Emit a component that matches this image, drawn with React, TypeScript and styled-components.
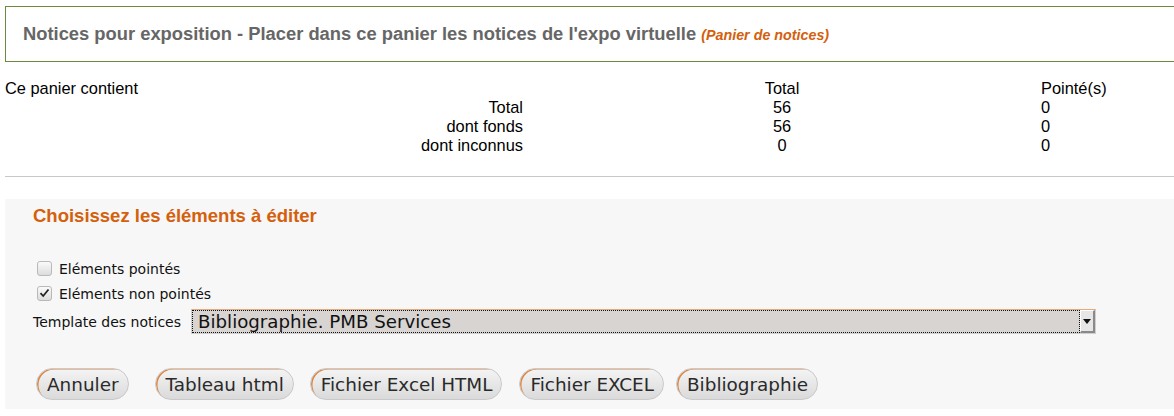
import React from "react";
import styled, { createGlobalStyle } from "styled-components";

const Global = createGlobalStyle`
  html, body { margin: 0; padding: 0; background: #fff; }
  body { font-family: "Liberation Sans", Arial, sans-serif; color: #000; overflow: hidden; }
`;

const Page = styled.div`
  width: 1174px;
  height: 416px;
  padding-top: 6px;
  box-sizing: border-box;
`;

const Header = styled.div`
  margin-left: 5px;
  height: 56px;
  box-sizing: border-box;
  border-top: 1px solid #6b8a3c;
  border-bottom: 1px solid #6b8a3c;
  border-left: 1px solid #6b8a3c;
  display: flex;
  align-items: center;
  padding-left: 17px;
`;

const HeaderTitle = styled.h1`
  margin: 0;
  font-size: 18.35px;
  font-weight: bold;
  color: #666;
  white-space: nowrap;
`;

const HeaderSub = styled.span`
  font-size: 14.3px;
  font-style: italic;
  font-weight: bold;
  color: #d4600c;
`;

const Stats = styled.div`
  margin: 17px 0 0 5px;
  display: grid;
  grid-template-columns: 518px 518px 1fr;
  grid-auto-rows: 19px;
  font-size: 16.4px;
  line-height: 19px;
`;

type CellProps = { $align: "left" | "center" | "right" };
const Cell = styled.div<CellProps>`
  text-align: ${(p) => p.$align};
  white-space: nowrap;
`;

const Rule = styled.hr`
  margin: 21px 0 0 5px;
  border: none;
  border-top: 1px solid #c8c8c8;
  height: 0;
`;

const Panel = styled.div`
  margin: 22px 0 0 5px;
  height: 210px;
  box-sizing: border-box;
  background: #f7f7f7;
  padding: 6px 0 0 28px;
  font-family: "DejaVu Sans", sans-serif;
  font-size: 14px;
  color: #111;
`;

const PanelTitle = styled.h3`
  margin: 0;
  font-family: "Liberation Sans", Arial, sans-serif;
  font-size: 18.5px;
  line-height: 22px;
  font-weight: bold;
  color: #d4600c;
`;

const Options = styled.div`
  margin-top: 29px;
  display: flex;
  flex-direction: column;
`;

const CheckRow = styled.label`
  display: flex;
  align-items: center;
  height: 25px;
  gap: 7px;
  padding-left: 4px;
`;

const Box = styled.span`
  width: 13px;
  height: 13px;
  border: 1px solid #b9b9b9;
  border-radius: 3px;
  background: linear-gradient(#fafafa, #dcdcdc);
  display: flex;
  align-items: center;
  justify-content: center;
  margin-top: -1px;
`;

const TemplateRow = styled.div`
  margin-top: 3px;
  display: flex;
  align-items: center;
  gap: 10px;
  height: 25px;
`;

const Select = styled.div`
  width: 905px;
  height: 25px;
  box-sizing: border-box;
  display: flex;
  border: 1px solid #cfcfcf;
  border-top-color: #e9a877;
  background: #fff;
`;

const SelectValue = styled.div`
  flex: 1;
  background: #d7d4d1;
  border: 1px dotted #111;
  display: flex;
  align-items: center;
  padding-left: 5px;
  font-size: 18.2px;
  color: #111;
  white-space: nowrap;
`;

const SelectArrow = styled.div`
  width: 15px;
  box-sizing: border-box;
  background: #e6e6e6;
  border-right: 2px solid #8a8a8a;
  border-bottom: 2px solid #8a8a8a;
  border-top: 1px solid #fff;
  border-left: 1px solid #fff;
  display: flex;
  align-items: center;
  justify-content: center;
`;

const Buttons = styled.div`
  margin-top: 34px;
  display: flex;
  padding-left: 3px;
`;

const Button = styled.button<{ $space: number }>`
  height: 32px;
  box-sizing: border-box;
  padding: 0 9px 0 10px;
  margin-left: ${(p) => p.$space}px;
  border: 1px solid #c9c9c9;
  border-radius: 16px;
  background: linear-gradient(#f4f4f4, #dadada);
  box-shadow: inset 2px 1px 0 -0.5px #dd8642;
  font-family: "DejaVu Sans", sans-serif;
  font-size: 18.4px;
  color: #2a2a2a;
  cursor: pointer;
`;

const rows: [string, string, string][] = [
  ["Total", "56", "0"],
  ["dont fonds", "56", "0"],
  ["dont inconnus", "0", "0"],
];

const buttons: [string, number][] = [
  ["Annuler", 0],
  ["Tableau html", 26],
  ["Fichier Excel HTML", 16],
  ["Fichier EXCEL", 17],
  ["Bibliographie", 12],
];

export default function App() {
  return (
    <Page>
      <Global />
      <Header>
        <HeaderTitle>
          Notices pour exposition - Placer dans ce panier les notices de l'expo virtuelle{" "}
          <HeaderSub>(Panier de notices)</HeaderSub>
        </HeaderTitle>
      </Header>
      <Stats>
        <Cell $align="left">Ce panier contient</Cell>
        <Cell $align="center">Total</Cell>
        <Cell $align="left">Pointé(s)</Cell>
        {rows.map(([l, t, p]) => (
          <React.Fragment key={l}>
            <Cell $align="right">{l}</Cell>
            <Cell $align="center">{t}</Cell>
            <Cell $align="left">{p}</Cell>
          </React.Fragment>
        ))}
      </Stats>
      <Rule />
      <Panel>
        <PanelTitle>Choisissez les éléments à éditer</PanelTitle>
        <Options>
          <CheckRow>
            <Box />
            Eléments pointés
          </CheckRow>
          <CheckRow>
            <Box>
              <svg width="11" height="10" viewBox="0 0 11 10">
                <path d="M1.5 5.2 L4.2 8 L9.5 1.5" fill="none" stroke="#222" strokeWidth="1.8" />
              </svg>
            </Box>
            Eléments non pointés
          </CheckRow>
          <TemplateRow>
            Template des notices
            <Select>
              <SelectValue>Bibliographie. PMB Services</SelectValue>
              <SelectArrow>
                <svg width="8" height="5" viewBox="0 0 8 5">
                  <path d="M0 0 H8 L4 5 Z" fill="#111" />
                </svg>
              </SelectArrow>
            </Select>
          </TemplateRow>
        </Options>
        <Buttons>
          {buttons.map(([label, space]) => (
            <Button key={label} $space={space}>
              {label}
            </Button>
          ))}
        </Buttons>
      </Panel>
    </Page>
  );
}
